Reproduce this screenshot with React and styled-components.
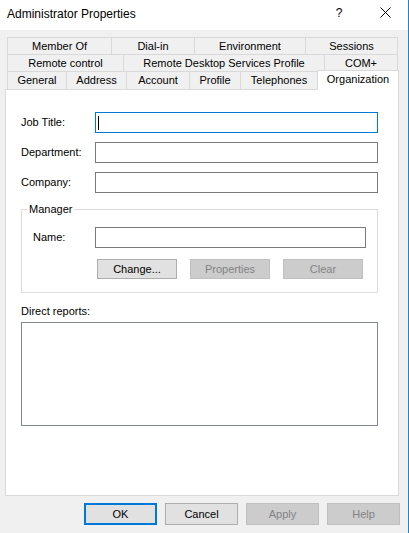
import React from 'react'
import styled, { createGlobalStyle } from 'styled-components'

const GlobalStyle = createGlobalStyle`
  html, body {
    margin: 0;
    padding: 0;
    background: #f0f0f0;
  }
  body {
    font-family: "Liberation Sans", Arial, sans-serif;
    font-size: 11px;
    color: #000;
  }
  * {
    box-sizing: border-box;
  }
`

const tabRows = [
  [
    { label: 'Member Of', width: 104 },
    { label: 'Dial-in', width: 83 },
    { label: 'Environment', width: 111 },
    { label: 'Sessions', width: 93, last: true },
  ],
  [
    { label: 'Remote control', width: 116 },
    { label: 'Remote Desktop Services Profile', width: 201 },
    { label: 'COM+', width: 74, last: true },
  ],
  [
    { label: 'General', width: 59 },
    { label: 'Address', width: 60 },
    { label: 'Account', width: 63 },
    { label: 'Profile', width: 51 },
    { label: 'Telephones', width: 77 },
    { label: 'Organization', width: 82, active: true },
  ],
]

const Window = styled.div`
  width: 409px;
  height: 533px;
  background: #f0f0f0;
  border-right: 1px solid #1883d7;
  display: flex;
  flex-direction: column;
  overflow: hidden;
`

const TitleBar = styled.div`
  height: 30px;
  background: #fff;
  display: flex;
  align-items: center;
  padding-left: 7px;
`

const Title = styled.div`
  flex: 1;
  font-size: 12px;
  padding-bottom: 2px;
`

const CaptionButton = styled.div`
  width: 46px;
  height: 30px;
  display: flex;
  align-items: center;
  justify-content: center;
  font-size: 12px;
  padding-bottom: ${p => p.$pad}px;
  svg {
    display: block;
  }
`

const Tabs = styled.div`
  margin-top: 7px;
  padding-left: 7px;
  display: flex;
  flex-direction: column;
`

const TabRow = styled.div`
  display: flex;
  align-items: flex-end;
  height: ${p => (p.$front ? 18 : 17)}px;
  position: relative;
  z-index: ${p => (p.$front ? 2 : 1)};
`

const Tab = styled.div`
  height: ${p => (p.$active ? 20 : p.$front ? 18 : 17)}px;
  border-top: 1px solid #d9d9d9;
  border-left: 1px solid #d9d9d9;
  border-right: ${p => (p.$last || p.$active ? '1px solid #d9d9d9' : 'none')};
  background: ${p => (p.$active ? '#fff' : '#f0f0f0')};
  display: flex;
  justify-content: center;
  padding-top: 2px;
  white-space: nowrap;
  margin-bottom: ${p => (p.$active ? -1 : 0)}px;
`

const Panel = styled.div`
  margin-left: 5px;
  width: 394px;
  height: 407px;
  background: #fff;
  border: 1px solid #d9d9d9;
  padding: 22px 20px 0 15px;
  display: flex;
  flex-direction: column;
`

const FieldGrid = styled.div`
  display: grid;
  grid-template-columns: ${p => p.$label}px 1fr;
  row-gap: 9px;
  align-items: center;
  margin-top: ${p => p.$top || 0}px;
`

const Label = styled.label`
  padding-bottom: 1px;
`

const Input = styled.div`
  height: 21px;
  background: #fff;
  border: 1px solid ${p => (p.$focused ? '#0078d7' : '#7a7a7a')};
  display: flex;
  align-items: center;
  padding-left: 2px;
`

const Caret = styled.span`
  width: 1px;
  height: 14px;
  background: #000;
`

const GroupBox = styled.fieldset`
  margin: 10px 0 0;
  padding: 5px 11px 13px 11px;
  border: 1px solid #dcdcdc;
  min-width: 0;
`

const Legend = styled.legend`
  padding: 0 2px;
  margin-left: -6px;
  line-height: 13px;
`

const ButtonRow = styled.div`
  display: flex;
  gap: ${p => p.$gap}px;
  margin-left: ${p => p.$indent || 0}px;
  margin-top: ${p => p.$top || 0}px;
  justify-content: ${p => (p.$end ? 'flex-end' : 'flex-start')};
  padding-right: ${p => p.$right || 0}px;
`

const Button = styled.div`
  width: ${p => p.$width}px;
  height: ${p => p.$height}px;
  display: flex;
  align-items: center;
  justify-content: center;
  background: ${p => (p.$disabled ? '#cccccc' : '#e1e1e1')};
  border: ${p => (p.$default ? '2px solid #0078d7' : `1px solid ${p.$disabled ? '#bfbfbf' : '#adadad'}`)};
  color: ${p => (p.$disabled ? '#838383' : '#000')};
  font-size: 11px;
  padding-bottom: 1px;
`

const ReportsLabel = styled.div`
  margin-top: 12px;
  line-height: 13px;
`

const ListBox = styled.div`
  margin-top: 4px;
  height: 104px;
  border: 1px solid #828790;
  background: #fff;
`

function CloseIcon() {
  return (
    <svg width="11" height="11" viewBox="0 0 11 11">
      <path d="M0.5 0.5 L10.5 10.5 M10.5 0.5 L0.5 10.5" stroke="#000" strokeWidth="1" fill="none" />
    </svg>
  )
}

export default function App() {
  return (
    <>
      <GlobalStyle />
      <Window>
        <TitleBar>
          <Title>Administrator Properties</Title>
          <CaptionButton $pad={4}>?</CaptionButton>
          <CaptionButton $pad={6}><CloseIcon /></CaptionButton>
        </TitleBar>

        <Tabs>
          {tabRows.map((row, i) => (
            <TabRow key={i} $front={i === 2}>
              {row.map(tab => (
                <Tab
                  key={tab.label}
                  $front={i === 2}
                  $last={tab.last}
                  $active={tab.active}
                  style={{ width: tab.width }}
                >
                  {tab.label}
                </Tab>
              ))}
            </TabRow>
          ))}
        </Tabs>

        <Panel>
          <FieldGrid $label={74}>
            <Label>Job Title:</Label>
            <Input $focused><Caret /></Input>
            <Label>Department:</Label>
            <Input />
            <Label>Company:</Label>
            <Input />
          </FieldGrid>

          <GroupBox>
            <Legend>Manager</Legend>
            <FieldGrid $label={62} $top={6}>
              <Label>Name:</Label>
              <Input />
            </FieldGrid>
            <ButtonRow $gap={13} $indent={64} $top={11}>
              <Button $width={80} $height={20}>Change...</Button>
              <Button $width={80} $height={20} $disabled>Properties</Button>
              <Button $width={80} $height={20} $disabled>Clear</Button>
            </ButtonRow>
          </GroupBox>

          <ReportsLabel>Direct reports:</ReportsLabel>
          <ListBox />
        </Panel>

        <ButtonRow $gap={8} $end $top={7} $right={8}>
          <Button $width={73} $height={22} $default>OK</Button>
          <Button $width={73} $height={22}>Cancel</Button>
          <Button $width={73} $height={22} $disabled>Apply</Button>
          <Button $width={73} $height={22} $disabled>Help</Button>
        </ButtonRow>
      </Window>
    </>
  )
}
